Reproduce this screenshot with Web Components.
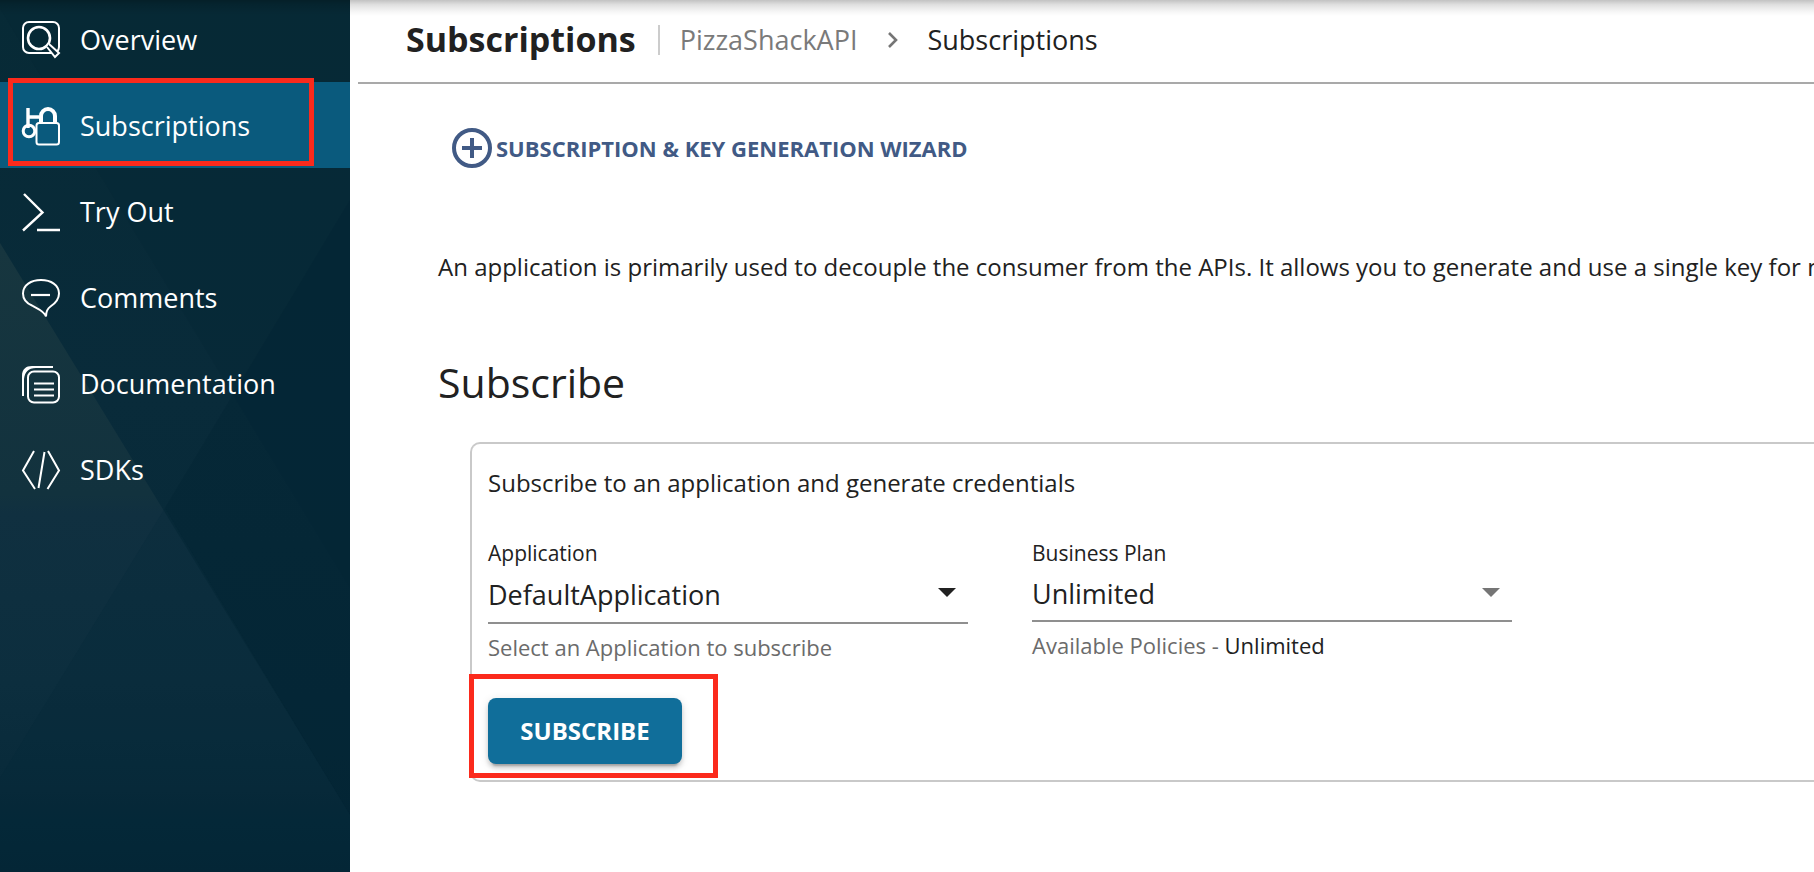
<!DOCTYPE html>
<html lang="en">
<head>
<meta charset="utf-8">
<meta name="viewport" content="width=device-width, initial-scale=1">
<title>Subscriptions</title>
<style>
  html, body { margin: 0; height: 100%; }
  body {
    font-family: "Open Sans", "Noto Sans", sans-serif;
    color: #212121;
    background: #fff;
    overflow: hidden;
  }
</style>
</head>
<body>
<portal-shell>
  <portal-sidebar slot="sidebar">
    <nav-item icon="overview">Overview</nav-item>
    <nav-item icon="subscriptions" active>Subscriptions</nav-item>
    <nav-item icon="tryout">Try Out</nav-item>
    <nav-item icon="comments">Comments</nav-item>
    <nav-item icon="docs">Documentation</nav-item>
    <nav-item icon="sdks">SDKs</nav-item>
  </portal-sidebar>
  <page-header heading="Subscriptions" parent="PizzaShackAPI" current="Subscriptions"></page-header>
  <wizard-button>SUBSCRIPTION &amp; KEY GENERATION WIZARD</wizard-button>
  <intro-text>An application is primarily used to decouple the consumer from the APIs. It allows you to generate and use a single key for multiple APIs</intro-text>
  <subscribe-section heading="Subscribe" lead="Subscribe to an application and generate credentials">
    <select-field slot="fields" label="Application" value="DefaultApplication" searchable>Select an Application to subscribe</select-field>
    <select-field slot="fields" label="Business Plan" value="Unlimited">Available Policies - <plan-name>Unlimited</plan-name></select-field>
    <primary-button slot="action">SUBSCRIBE</primary-button>
  </subscribe-section>
</portal-shell>

<script>
const define = (name, html, setup) => {
  const template = document.createElement('template');
  template.innerHTML = html;
  customElements.define(name, class extends HTMLElement {
    constructor() {
      super();
      this.attachShadow({ mode: 'open' }).append(template.content.cloneNode(true));
    }
    connectedCallback() {
      if (setup) setup(this, this.shadowRoot);
    }
  });
};

define('portal-shell', `
  <style>
    :host { display: grid; grid-template-columns: 350px minmax(0, 1fr); min-height: 100vh; position: relative; }
    main { overflow: hidden; }
    .shade {
      position: absolute; inset: 0 0 auto 0; height: 16px; pointer-events: none;
      background: linear-gradient(rgba(0,0,0,.24), rgba(0,0,0,.12) 30%, rgba(0,0,0,.03) 75%, transparent);
    }
  </style>
  <slot name="sidebar"></slot>
  <main><slot></slot></main>
  <div class="shade"></div>
`);

define('portal-sidebar', `
  <style>
    :host { display: block; position: relative; overflow: hidden; background: #052736; color: #fff; }
    .facets { position: absolute; inset: 0; width: 100%; height: 100%; }
    nav { position: relative; margin-top: -4px; }
  </style>
  <svg class="facets" viewBox="0 0 350 872" preserveAspectRatio="none" aria-hidden="true">
    <defs>
      <linearGradient id="base" x1="0" y1="0" x2="0" y2="1">
        <stop offset="0" stop-color="#072a36"/><stop offset=".45" stop-color="#092b3a"/><stop offset=".8" stop-color="#072938"/><stop offset="1" stop-color="#042636"/>
      </linearGradient>
      <linearGradient id="hill" gradientUnits="userSpaceOnUse" x1="0" y1="243" x2="0" y2="872">
        <stop offset="0" stop-color="#17363f"/><stop offset=".4" stop-color="#12323e"/><stop offset=".43" stop-color="#103040"/><stop offset=".7" stop-color="#0c2e3e"/><stop offset=".87" stop-color="#082a3a"/><stop offset=".92" stop-color="#052838"/><stop offset="1" stop-color="#042636"/>
      </linearGradient>
    </defs>
    <rect width="350" height="872" fill="url(#base)"/>
    <path d="M0 8 97 170 350 588V0H0z" fill="#002233" fill-opacity=".14"/>
    <path d="M350 200 165 508 350 815z" fill="#002233" fill-opacity=".32"/>
    <path d="M0 243 350 815V872H0z" fill="url(#hill)"/>
    <path d="M165 508 0 778V872H350V815z" fill="#042636" fill-opacity=".25"/>
  </svg>
  <nav aria-label="API"><slot></slot></nav>
`);

const navIcons = {
  overview: '<rect x="1" y="1" width="36" height="31" rx="6"/><circle cx="17" cy="17" r="11" stroke-width="2.6"/><path d="m25 26 8 10 4-4-10-9" fill="#062736"/>',
  subscriptions: '<path d="M6 1v20M6 10h11" stroke-width="3.4"/><circle cx="7" cy="24" r="5.800" stroke-width="3"/><path d="M19 16V9a7 7 0 0 1 14 0v7" stroke-width="4"/><rect x="14.500" y="16" width="22.500" height="21.500" rx="2.500" fill="#0a5a7d"/>',
  tryout: '<path d="m2 1 18.500 18.500L1 37.500M15 37h23" stroke-width="2.400"/>',
  comments: '<path d="M24 37.500c-2-6-9-8-14-11C4 24 1 20 1 14.500 1 6 9 1 19 1s18 5 18 13.500c0 6-4 10-8.500 13-3 2-4.500 5-4.500 10z"/><path d="M9 16h19" stroke-width="2.200"/>',
  docs: '<rect x="6" y="6.500" width="31" height="31" rx="6"/><path d="M12 18.500h20M12 24.500h20M12 30.500h20"/><path d="M0 31V11C0 4 4 1 10 1h21v2H14C6 3 3 7 2 14v17z" fill="#fff" stroke="none"/>',
  sdks: '<path d="M12 0 1 19.500 13 38M26 0l11 19.500L25.500 38M22.500 1l-6 36"/>'
};

define('nav-item', `
  <style>
    :host { display: block; position: relative; }
    a {
      display: flex; align-items: center; gap: 20px; height: 86px; padding: 2px 22px 0; box-sizing: border-box;
      color: #fff; text-decoration: none; font-size: 27px; line-height: 38px;
    }
    svg { width: 38px; height: 38px; flex: none; fill: none; stroke: #fff; stroke-width: 2; overflow: visible; }
    :host([active]) a { background: #0a5a7d; }
    .mark { display: none; }
    :host([active]) .mark {
      display: block; position: absolute; inset: -4px 36px 2px 8px;
      border: 5px solid #fb2a1c; pointer-events: none;
    }
  </style>
  <a href="#"><svg viewBox="0 0 38 38" aria-hidden="true"></svg><span><slot></slot></span></a>
  <div class="mark"></div>
`, (host, root) => {
  root.querySelector('svg').innerHTML = navIcons[host.getAttribute('icon')];
  if (host.hasAttribute('active')) root.querySelector('a').setAttribute('aria-current', 'page');
});

define('page-header', `
  <style>
    :host { display: block; margin-left: 8px; border-bottom: 2px solid #a9a9a9; }
    header { display: flex; align-items: center; height: 78px; padding: 0 0 4px 48px; }
    h1 { margin: 0; font-size: 34px; line-height: 46px; font-weight: 700; }
    nav { display: flex; align-items: center; margin-left: 22px; padding-top: 2px; font-size: 27px; line-height: 38px; white-space: nowrap; }
    .rule { width: 2px; height: 30px; background: #ccc; margin-right: 20px; }
    a { color: #7a7a7a; text-decoration: none; }
    svg { width: 12px; height: 18px; margin: 0 28px 0 30px; fill: none; stroke: #757575; stroke-width: 2.6; }
  </style>
  <header>
    <h1></h1>
    <nav aria-label="Breadcrumb">
      <div class="rule"></div>
      <a href="#"></a>
      <svg viewBox="0 0 12 18" aria-hidden="true"><path d="m2 2 7 7-7 7"/></svg>
      <span></span>
    </nav>
  </header>
`, (host, root) => {
  root.querySelector('h1').textContent = host.getAttribute('heading');
  root.querySelector('a').textContent = host.getAttribute('parent');
  root.querySelector('span').textContent = host.getAttribute('current');
});

define('wizard-button', `
  <style>
    :host { display: block; padding: 44px 0 0 102px; }
    button {
      display: flex; align-items: center; gap: 4px; padding: 0; border: 0; background: none;
      font: 700 22px/40px "Open Sans", "Noto Sans", sans-serif; color: #415a85; white-space: nowrap;
    }
    svg { width: 40px; height: 40px; fill: none; stroke: currentColor; stroke-width: 4; }
  </style>
  <button type="button">
    <svg viewBox="0 0 40 40" aria-hidden="true"><circle cx="20" cy="20" r="18"/><path d="M20 10v20M10 20h20" stroke-width="4"/></svg>
    <span><slot></slot></span>
  </button>
`);

define('intro-text', `
  <style>
    :host { display: block; padding: 81px 0 0 88px; }
    p { margin: 0; font-size: 24px; line-height: 36px; white-space: nowrap; }
  </style>
  <p><slot></slot></p>
`);

define('subscribe-section', `
  <style>
    :host { display: block; padding: 69px 0 0 88px; }
    h2 { margin: 0; font-size: 41px; line-height: 56px; font-weight: 400; }
    .card {
      position: relative; margin: 32px 0 0 32px; padding: 21px 16px 16px;
      border: 2px solid #c9c9c9; border-right: 0; border-radius: 10px 0 0 10px;
    }
    p { margin: 0; font-size: 24px; line-height: 36px; }
    .fields { display: flex; gap: 64px; margin-top: 37px; }
    .action { position: relative; display: inline-block; margin-top: 35px; vertical-align: top; }
    .mark { position: absolute; inset: -24px -36px -14px -19px; border: 5px solid #fb2a1c; pointer-events: none; }
  </style>
  <h2></h2>
  <div class="card">
    <p></p>
    <div class="fields"><slot name="fields"></slot></div>
    <div class="action"><slot name="action"></slot><div class="mark"></div></div>
  </div>
`, (host, root) => {
  root.querySelector('h2').textContent = host.getAttribute('heading');
  root.querySelector('p').textContent = host.getAttribute('lead');
});

define('select-field', `
  <style>
    :host { display: block; flex: 0 1 480px; min-width: 0; --arrow: #757575; --box: 52px; }
    :host([searchable]) { --arrow: #212121; --box: 54px; }
    label { display: block; font-size: 21px; line-height: 30px; }
    .box { position: relative; height: var(--box); border-bottom: 2px solid #8f8f8f; }
    select {
      appearance: none; width: 100%; height: 100%; margin: 0; padding: 0; border: 0; background: none;
      font: 400 27px/38px "Open Sans", "Noto Sans", sans-serif; color: #212121;
    }
    svg { position: absolute; right: 12px; top: 20px; width: 18px; height: 9px; fill: var(--arrow); pointer-events: none; }
    .help { margin-top: 7px; font-size: 22px; line-height: 32px; color: #6b6b6b; }
  </style>
  <label for="choice"></label>
  <div class="box">
    <select id="choice" aria-describedby="help"><option></option></select>
    <svg viewBox="0 0 18 9" aria-hidden="true"><path d="M0 0h18L9 9z"/></svg>
  </div>
  <div class="help" id="help"><slot></slot></div>
`, (host, root) => {
  root.querySelector('label').textContent = host.getAttribute('label');
  root.querySelector('option').textContent = host.getAttribute('value');
});

define('plan-name', `<style>:host { display: inline; color: #212121; }</style><slot></slot>`);

define('primary-button', `
  <style>
    :host { display: block; }
    button {
      display: block; min-width: 194px; height: 66px; padding: 0 32px; border: 0; border-radius: 8px; background: #106e9a; color: #fff;
      font: 700 24px/34px "Open Sans", "Noto Sans", sans-serif;
      box-shadow: 0 6px 2px -4px rgba(0,0,0,.2), 0 4px 4px rgba(0,0,0,.14), 0 2px 10px rgba(0,0,0,.12);
    }
  </style>
  <button type="button"><slot></slot></button>
`);
</script>
</body>
</html>
